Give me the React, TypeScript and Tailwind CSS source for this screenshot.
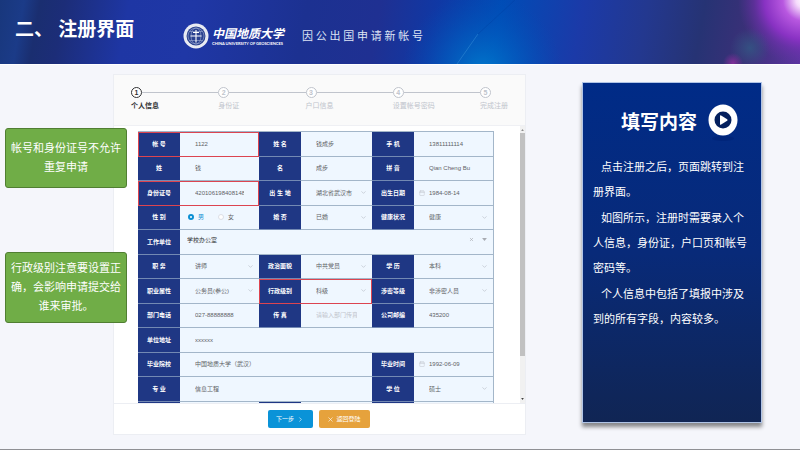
import React from 'react';
import { Calendar, ChevronDown, ChevronRight, X } from 'lucide-react';

type FieldKind = 'text' | 'select' | 'date' | 'gender' | 'company' | 'empty';

interface FormField {
  id: string;
  label: string;
  value?: string;
  placeholder?: string;
  kind?: FieldKind;
  span?: 1 | 2 | 3;
  marked?: boolean;
}

const steps = ['个人信息', '身份证', '户口信息', '设置帐号密码', '完成注册'];

const fields: FormField[] = [
  { id: 'account', label: '帐 号', value: '1122', marked: true },
  { id: 'fullName', label: '姓 名', value: '钱成步' },
  { id: 'mobile', label: '手 机', value: '13811111114' },
  { id: 'lastName', label: '姓', value: '钱' },
  { id: 'firstName', label: '名', value: '成步' },
  { id: 'pinyin', label: '拼 音', value: 'Qian Cheng Bu' },
  { id: 'idCard', label: '身份证号', value: '420106198408148888', marked: true },
  { id: 'birthPlace', label: '出 生 地', value: '湖北省武汉市', kind: 'select' },
  { id: 'birthday', label: '出生日期', value: '1984-08-14', kind: 'date' },
  { id: 'gender', label: '性 别', kind: 'gender' },
  { id: 'marriage', label: '婚 否', value: '已婚', kind: 'select' },
  { id: 'health', label: '健康状况', value: '健康', kind: 'select' },
  { id: 'company', label: '工作单位', value: '学校办公室', kind: 'company', span: 3 },
  { id: 'duty', label: '职 务', value: '讲师', kind: 'select' },
  { id: 'politics', label: '政治面貌', value: '中共党员', kind: 'select' },
  { id: 'education', label: '学 历', value: '本科', kind: 'select' },
  { id: 'jobType', label: '职业属性', value: '公务员(参公)', kind: 'select' },
  { id: 'rank', label: '行政级别', value: '科级', kind: 'select', marked: true },
  { id: 'secret', label: '涉密等级', value: '非涉密人员', kind: 'select' },
  { id: 'phone', label: '部门电话', value: '027-88888888' },
  { id: 'fax', label: '传 真', placeholder: '请输入部门传真' },
  { id: 'postcode', label: '公司邮编', value: '435200' },
  { id: 'address', label: '单位地址', value: 'xxxxxx', span: 3 },
  { id: 'school', label: '毕业院校', value: '中国地质大学（武汉）', span: 2 },
  { id: 'graduated', label: '毕业时间', value: '1992-06-09', kind: 'date' },
  { id: 'major', label: '专 业', value: '信息工程', span: 2 },
  { id: 'degree', label: '学 位', value: '硕士', kind: 'select' },
  // top edge of the next row, cut off by the scroll area
  { id: 'next1', label: '', kind: 'empty' },
  { id: 'next2', label: '', kind: 'empty' },
  { id: 'next3', label: '', kind: 'empty' },
];

const spanClass = { 1: 'col-span-1', 2: 'col-span-2', 3: 'col-span-3' };

const SchoolLogo: React.FC = () => (
  <svg viewBox="0 0 52 52" className="h-[26px] w-[26px] shrink-0" aria-hidden="true">
    <circle cx="26" cy="26" r="25" fill="#eceef4" />
    <circle cx="26" cy="26" r="22" fill="none" stroke="#cdd3e4" strokeWidth="1" strokeDasharray="2 2" />
    <circle cx="26" cy="26" r="19" fill="#2a418f" />
    <g fill="none" stroke="#a9b5da" strokeWidth="1.100">
      <circle cx="26" cy="26" r="16" />
      <ellipse cx="26" cy="26" rx="10" ry="16" />
      <path d="M13 17h26M13 35h26" />
    </g>
    <g fill="none" stroke="#ffffff" strokeWidth="2.200">
      <path d="M15 26h22M26 14v25M20 19h12" />
    </g>
  </svg>
);

const PlayBadge: React.FC = () => (
  <svg viewBox="0 0 60 76" className="h-[38px] w-[30px] shrink-0" aria-hidden="true">
    <ellipse cx="30" cy="69" rx="22" ry="5" fill="#00257a" />
    <ellipse cx="30" cy="32" rx="29" ry="31" fill="#ffffff" />
    <circle cx="30" cy="32" r="17" fill="#04205e" />
    <path d="M24 24v16a1.500 1.500 0 0 0 2.300 1.200l12-7.900a1.600 1.600 0 0 0 0-2.600l-12-7.900a1.500 1.500 0 0 0-2.300 1.200z" fill="#ffffff" />
  </svg>
);

const Header: React.FC = () => (
  <header className="relative flex h-16 items-center overflow-hidden bg-[linear-gradient(100deg,#18377c_0%,#1b3b88_3%,#1a2e70_5%,#1c2d78_8%,#1e36a4_16%,#1f37a6_24%,#1c3191_38%,#1f3092_47%,#1038a4_54%,#004cb6_62%,#1b3aa8_72%,#23388f_80%,#263374_87%,#3b3078_93%,#5b35a0_100%)] pl-[15px]">
    <svg viewBox="0 0 800 64" preserveAspectRatio="none" className="absolute inset-0 h-full w-full" aria-hidden="true">
      <defs>
        <radialGradient id="flare" cx="804" cy="0" r="66" gradientUnits="userSpaceOnUse">
          <stop offset="0" stopColor="#ffffff" />
          <stop offset="0.12" stopColor="#f6dcfc" />
          <stop offset="0.32" stopColor="#b858e0" />
          <stop offset="0.6" stopColor="#8c32c6" stopOpacity="0.95" />
          <stop offset="0.76" stopColor="#7c30b8" stopOpacity="0.5" />
          <stop offset="1" stopColor="#6a30a8" stopOpacity="0" />
        </radialGradient>
        <radialGradient id="sky" cx="482" cy="72" r="80" gradientUnits="userSpaceOnUse">
          <stop offset="0" stopColor="#0080d0" stopOpacity="0.85" />
          <stop offset="0.5" stopColor="#0064c4" stopOpacity="0.5" />
          <stop offset="1" stopColor="#0050b8" stopOpacity="0" />
        </radialGradient>
        <radialGradient id="green" cx="750" cy="48" r="20" gradientUnits="userSpaceOnUse">
          <stop offset="0" stopColor="#325884" stopOpacity="0.8" />
          <stop offset="1" stopColor="#325884" stopOpacity="0" />
        </radialGradient>
        <radialGradient id="pink" cx="733" cy="63" r="10" gradientUnits="userSpaceOnUse">
          <stop offset="0" stopColor="#802f98" />
          <stop offset="1" stopColor="#802f98" stopOpacity="0" />
        </radialGradient>
      </defs>
      <rect width="800" height="64" fill="url(#sky)" />
      <rect width="800" height="64" fill="url(#flare)" />
      <rect width="800" height="64" fill="url(#green)" />
      <rect width="800" height="64" fill="url(#pink)" />
      <path d="M457 64 478 34" fill="none" stroke="#3a94da" strokeOpacity="0.6" strokeWidth="0.8" />
      <path d="M478 34 515 0" fill="none" stroke="#003c9c" strokeOpacity="0.3" strokeWidth="1" />
    </svg>
    <h1 className="relative w-[168px] shrink-0 pb-1 text-[19px] font-bold leading-6 text-white">二、 注册界面</h1>
    <div className="relative mt-2 flex items-center">
      <SchoolLogo />
      <div className="ml-[3px] w-[90px] pt-0.5 text-white">
        <p className="text-[12px] font-bold italic leading-[14px]">中国地质大学</p>
        <p className="whitespace-nowrap font-['Lato',sans-serif] text-[4px] font-bold leading-[6px]">CHINA UNIVERSITY OF GEOSCIENCES</p>
      </div>
      <p className="whitespace-nowrap font-['Liberation_Serif','Noto_Sans_CJK_SC',serif] text-[11px] leading-4 text-[#dde3f4]">
        因 公 出 国 申 请 新 帐 号
      </p>
    </div>
  </header>
);

const Note: React.FC<{ children: React.ReactNode }> = ({ children }) => (
  <div className="grid min-h-[60px] w-[122px] content-center rounded-[3px] border border-[#507e32] bg-[#70ad47] py-[6px] text-center text-[11px] leading-[19px] text-white">
    <p>{children}</p>
  </div>
);

const Stepper: React.FC = () => (
  <ol className="flex border-b border-[#eff0f4] bg-[#fafafa] px-[17px] pb-[14px] pt-3">
    {steps.map((step, i) => {
      const last = i === steps.length - 1;
      return (
        <li
          key={step}
          className={`${last ? 'w-7 shrink-0' : 'min-w-0 flex-1'} ${i === 0 ? 'font-bold text-[#303133]' : 'text-[#c0c4cc]'}`}
        >
          <div className="flex items-center">
            <span className="flex h-[11px] w-[11px] shrink-0 items-center justify-center rounded-full border border-current bg-white text-[7px] font-bold leading-none">
              {i + 1}
            </span>
            {!last && <span className="h-px flex-1 bg-[#c0c4cc]" />}
          </div>
          <span className="mt-[3px] block whitespace-nowrap text-[7px] leading-[10px]">{step}</span>
        </li>
      );
    })}
  </ol>
);

const FieldControl: React.FC<{ field: FormField }> = ({ field }) => {
  if (field.kind === 'empty') {
    return null;
  }

  if (field.kind === 'gender') {
    const radio = 'mr-1 h-[6px] w-[6px] appearance-none rounded-full border border-[#dcdfe6] bg-white checked:border-2 checked:border-[#0a8fd3]';
    return (
      <div className="flex items-center pl-2" role="radiogroup" aria-label="性别">
        <label className="flex w-[30px] items-center text-[#0a8fd3]">
          <input type="radio" name="gender" defaultChecked className={radio} />男
        </label>
        <label className="flex items-center">
          <input type="radio" name="gender" className={radio} />女
        </label>
      </div>
    );
  }

  if (field.kind === 'company') {
    return (
      <>
        <input id={field.id} defaultValue={field.value} className="w-full min-w-0 bg-transparent pb-1 pl-[7px] text-[#303133] outline-none" />
        <button type="button" aria-label="清除" className="mb-[5px] mr-2 text-[#a8abb2]">
          <X className="h-[5px] w-[5px]" strokeWidth={3} />
        </button>
        <svg viewBox="0 0 8 5" className="mb-[5px] mr-[6px] h-[3px] w-[5px] shrink-0" aria-hidden="true">
          <path d="M0 0h8L4 5z" fill="#a8abb2" />
        </svg>
      </>
    );
  }

  if (field.kind === 'select') {
    return (
      <>
        <select id={field.id} className="w-full min-w-0 appearance-none bg-transparent pl-[15px] outline-none">
          <option>{field.value}</option>
        </select>
        <ChevronDown className="pointer-events-none absolute right-[5px] h-[7px] w-[7px] text-[#b4b9c3]" strokeWidth={2} />
      </>
    );
  }

  return (
    <>
      {field.kind === 'date' && <Calendar className="absolute left-[5px] h-[6px] w-[6px] text-[#c0c4cc]" strokeWidth={2} />}
      <input
        id={field.id}
        defaultValue={field.value}
        placeholder={field.placeholder}
        className="w-full min-w-0 bg-transparent px-[15px] outline-none placeholder:text-[#c0c4cc]"
      />
    </>
  );
};

const FieldCell: React.FC<{ field: FormField }> = ({ field }) => (
  <div className={`relative flex min-h-0 ${spanClass[field.span || 1]}`}>
    <label
      htmlFor={field.id}
      className="flex w-[42px] shrink-0 items-center justify-center border-b border-[#7389b3] bg-[#1f3784] font-bold text-white"
    >
      {field.label}
    </label>
    <div className="relative flex min-w-0 flex-1 items-center border-b border-[#a3b6c9] bg-[#eff7ff] text-[#606266]">
      <FieldControl field={field} />
    </div>
    {field.marked && <span className="pointer-events-none absolute inset-0 z-10 border border-[#dc4450]" />}
  </div>
);

const ScrollBar: React.FC = () => (
  <div className="flex w-[5px] shrink-0 flex-col items-center justify-between bg-[#f1f1f1] py-[3px]" aria-hidden="true">
    <svg viewBox="0 0 4 3" className="h-[2px] w-[3px]"><path d="M2 0 4 3H0z" fill="#8c8c8c" /></svg>
    <span className="mb-auto mt-[2px] h-[223px] w-full bg-[#c1c1c1]" />
    <svg viewBox="0 0 4 3" className="h-[2px] w-[3px]"><path d="M0 0h4L2 3z" fill="#404040" /></svg>
  </div>
);

const RegisterCard: React.FC = () => (
  <form className="min-w-0 flex-1 self-start border border-[#eceef3] bg-white" onSubmit={(e) => e.preventDefault()}>
    <Stepper />
    <div className="flex h-[278px] overflow-hidden border-b border-[#eceef3]">
      <div className="min-w-0 flex-1 pl-6 pr-[26px] pt-[5px]">
        <div className="grid h-[295px] auto-rows-fr grid-cols-[121fr_113fr_121fr] border-r border-t border-[#a3b6c9] text-[6px] leading-[10px]">
          {fields.map((field) => (
            <FieldCell key={field.id} field={field} />
          ))}
        </div>
      </div>
      <ScrollBar />
    </div>
    <div className="flex justify-center gap-[6px] py-[6px] pr-0.5 text-[6px] leading-[10px] text-white">
      <button type="submit" className="flex h-[18px] w-[45px] items-center justify-center gap-[3px] rounded-[2px] bg-[#0a93d8]">
        下一步
        <ChevronRight className="h-[7px] w-[7px]" />
      </button>
      <button type="button" className="flex h-[18px] w-[51px] items-center justify-center gap-[2px] rounded-[2px] bg-[#e6a23c]">
        <X className="h-[7px] w-[7px]" />
        返回登陆
      </button>
    </div>
  </form>
);

const InfoPanel: React.FC = () => (
  <section className="ml-14 mt-2 h-[341px] w-[180px] shrink-0 border border-[#b0c4e6] bg-linear-to-b from-[#002b87] via-[#082a79] to-[#102554] pl-[10px] pt-[21px] text-white shadow-[0_4px_4px_rgba(0,0,0,0.45)]">
    <div className="flex items-start gap-[11px] pl-7">
      <h2 className="mt-[7px] text-[19px] font-bold leading-6">填写内容</h2>
      <PlayBadge />
    </div>
    <div className="mt-[13px] flex flex-col gap-px whitespace-nowrap text-[11px] leading-[25px]">
      <p className="indent-2">点击注册之后，页面跳转到注<br />册界面。</p>
      <p className="indent-2">如图所示，注册时需要录入个<br />人信息，身份证，户口页和帐号<br />密码等。</p>
      <p className="indent-2">个人信息中包括了填报中涉及<br />到的所有字段，内容较多。</p>
    </div>
  </section>
);

const App: React.FC = () => {
  return (
    <div className="flex min-h-screen flex-col border-b border-[#8f9094] bg-[#f5f6fb] font-['Liberation_Sans','Noto_Sans_CJK_SC',sans-serif]">
      <Header />
      <main className="flex flex-1 border-t border-white pr-[38px] pt-[9px]">
        <aside className="relative z-20 flex w-[113px] shrink-0 flex-col gap-16 pl-[5px] pt-[54px]">
          <Note>帐号和身份证号不允许<br />重复申请</Note>
          <Note>行政级别注意要设置正<br />确，会影响申请提交给<br />谁来审批。</Note>
        </aside>
        <RegisterCard />
        <InfoPanel />
      </main>
    </div>
  );
};

export default App;
